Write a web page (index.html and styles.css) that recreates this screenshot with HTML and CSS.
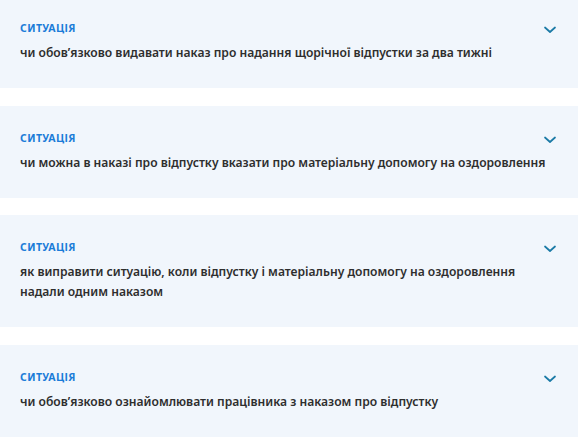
FILE: index.html
```html
<!doctype html>
<html lang="uk">
    <head>
        <meta charset="UTF-8" />
        <meta name="viewport" content="width=device-width, initial-scale=1.0" />
        <title>Ситуації</title>
        <link rel="stylesheet" href="styles.css">
    </head>
    <body>
        <div class="situations">
            <div class="situation-card">
                <div class="situation-head">
                    <span class="situation-label">Ситуація</span>
                    <svg class="chevron" width="12" height="8" viewBox="0 0 12 8" fill="none" stroke="currentColor" stroke-width="1.7" stroke-linecap="round" stroke-linejoin="round">
                        <path d="M1 1.5L6 6L11 1.5"></path>
                    </svg>
                </div>
                <p class="situation-title">чи обов’язково видавати наказ про надання щорічної відпустки за два тижні</p>
            </div>

            <div class="situation-card">
                <div class="situation-head">
                    <span class="situation-label">Ситуація</span>
                    <svg class="chevron" width="12" height="8" viewBox="0 0 12 8" fill="none" stroke="currentColor" stroke-width="1.7" stroke-linecap="round" stroke-linejoin="round">
                        <path d="M1 1.5L6 6L11 1.5"></path>
                    </svg>
                </div>
                <p class="situation-title">чи можна в наказі про відпустку вказати про матеріальну допомогу на оздоровлення</p>
            </div>

            <div class="situation-card">
                <div class="situation-head">
                    <span class="situation-label">Ситуація</span>
                    <svg class="chevron" width="12" height="8" viewBox="0 0 12 8" fill="none" stroke="currentColor" stroke-width="1.7" stroke-linecap="round" stroke-linejoin="round">
                        <path d="M1 1.5L6 6L11 1.5"></path>
                    </svg>
                </div>
                <p class="situation-title">як виправити ситуацію, коли відпустку і матеріальну допомогу на оздоровлення<br>надали одним наказом</p>
            </div>

            <div class="situation-card">
                <div class="situation-head">
                    <span class="situation-label">Ситуація</span>
                    <svg class="chevron" width="12" height="8" viewBox="0 0 12 8" fill="none" stroke="currentColor" stroke-width="1.7" stroke-linecap="round" stroke-linejoin="round">
                        <path d="M1 1.5L6 6L11 1.5"></path>
                    </svg>
                </div>
                <p class="situation-title">чи обов’язково ознайомлювати працівника з наказом про відпустку</p>
            </div>
        </div>
    </body>
</html>
```

FILE: styles.css
```css
* {
    margin: 0;
    padding: 0;
    box-sizing: border-box;
}

body {
    background: #fff;
    font-family: "Noto Sans", "Open Sans", sans-serif;
    color: #2e2e2e;
}

.situations {
    width: 578px;
    margin-top: -4px;
    display: flex;
    flex-direction: column;
    gap: 17.5px;
}

.situation-card {
    background: #f1f6fc;
    padding: 24px 22px 25px 20px;
}

.situation-head {
    display: flex;
    align-items: center;
    justify-content: space-between;
    height: 16px;
    margin-bottom: 7px;
}

.situation-label {
    font-size: 10.5px;
    font-weight: 700;
    letter-spacing: 0.4px;
    text-transform: uppercase;
    color: #1a7cd8;
    line-height: 16px;
}

.chevron {
    color: #1b7aa6;
    margin-top: 4px;
}

.situation-title {
    font-size: 12.1px;
    font-weight: 600;
    line-height: 20px;
    color: #2e2e2e;
}
```
